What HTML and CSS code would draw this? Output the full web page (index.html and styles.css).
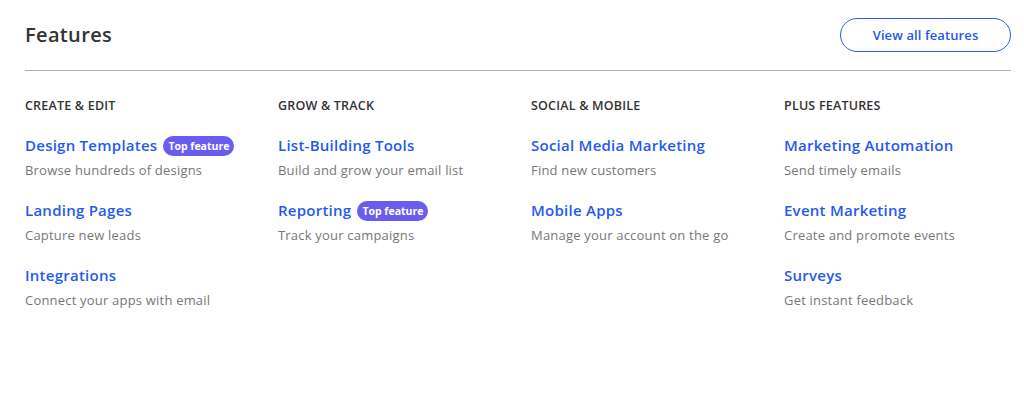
FILE: index.html
```html
<!DOCTYPE html>
<html lang="en">
<head>
<meta charset="utf-8">
<title>Features</title>
<link rel="stylesheet" href="styles.css">
</head>
<body>
<section class="features">
  <header class="features-head">
    <h2 class="features-title">Features</h2>
    <a class="btn-outline" href="#">View all features</a>
  </header>
  <div class="columns">
    <div class="col">
      <h3 class="col-title">CREATE &amp; EDIT</h3>
      <div class="item">
        <a class="item-link" href="#">Design Templates</a><span class="badge">Top feature</span>
        <p class="item-desc">Browse hundreds of designs</p>
      </div>
      <div class="item">
        <a class="item-link" href="#">Landing Pages</a>
        <p class="item-desc">Capture new leads</p>
      </div>
      <div class="item">
        <a class="item-link" href="#">Integrations</a>
        <p class="item-desc">Connect your apps with email</p>
      </div>
    </div>
    <div class="col">
      <h3 class="col-title">GROW &amp; TRACK</h3>
      <div class="item">
        <a class="item-link" href="#">List-Building Tools</a>
        <p class="item-desc">Build and grow your email list</p>
      </div>
      <div class="item">
        <a class="item-link" href="#">Reporting</a><span class="badge">Top feature</span>
        <p class="item-desc">Track your campaigns</p>
      </div>
    </div>
    <div class="col">
      <h3 class="col-title">SOCIAL &amp; MOBILE</h3>
      <div class="item">
        <a class="item-link" href="#">Social Media Marketing</a>
        <p class="item-desc">Find new customers</p>
      </div>
      <div class="item">
        <a class="item-link" href="#">Mobile Apps</a>
        <p class="item-desc">Manage your account on the go</p>
      </div>
    </div>
    <div class="col">
      <h3 class="col-title">PLUS FEATURES</h3>
      <div class="item">
        <a class="item-link" href="#">Marketing Automation</a>
        <p class="item-desc">Send timely emails</p>
      </div>
      <div class="item">
        <a class="item-link" href="#">Event Marketing</a>
        <p class="item-desc">Create and promote events</p>
      </div>
      <div class="item">
        <a class="item-link" href="#">Surveys</a>
        <p class="item-desc">Get instant feedback</p>
      </div>
    </div>
  </div>
</section>
</body>
</html>
```
FILE: styles.css
```css
* { box-sizing: border-box; }
html, body { margin: 0; padding: 0; background: #fff; }
body {
  font-family: "Open Sans", "Noto Sans", Arial, sans-serif;
  color: #333;
}
.features {
  padding: 18px 13px 0 25px;
}
.features-head {
  display: flex;
  align-items: center;
  justify-content: space-between;
  height: 34px;
}
.features-title {
  margin: 0;
  font-size: 20px;
  line-height: 32px;
  font-weight: 600;
  color: #333;
  letter-spacing: 0.35px;
}
.btn-outline {
  display: flex;
  align-items: center;
  justify-content: center;
  width: 171px;
  height: 34px;
  border: 1px solid #2c5ef0;
  border-radius: 17px;
  color: #2258ee;
  font-size: 13px;
  font-weight: 600;
  letter-spacing: 0.1px;
  text-decoration: none;
}
.columns {
  margin-top: 18px;
  border-top: 1px solid #adadad;
  padding-top: 26px;
  display: grid;
  grid-template-columns: repeat(4, 1fr);
  column-gap: 26px;
}
.col-title {
  margin: 0 0 19px;
  font-size: 12.5px;
  line-height: 18px;
  font-weight: 600;
  color: #333;
  letter-spacing: 0.2px;
}
.item {
  margin-bottom: 18px;
}
.item-link {
  color: #1f5bf0;
  font-size: 15px;
  line-height: 22px;
  font-weight: 600;
  letter-spacing: 0.25px;
  text-decoration: none;
}
.badge {
  display: inline-block;
  vertical-align: 1px;
  margin-left: 6px;
  height: 20px;
  line-height: 20px;
  padding: 0 5px;
  border-radius: 10px;
  background: #6b5cf0;
  color: #fff;
  font-size: 10.5px;
  font-weight: 700;
}
.item-desc {
  margin: 3px 0 0;
  font-size: 13px;
  line-height: 22px;
  color: #777;
  letter-spacing: 0.2px;
}
```
